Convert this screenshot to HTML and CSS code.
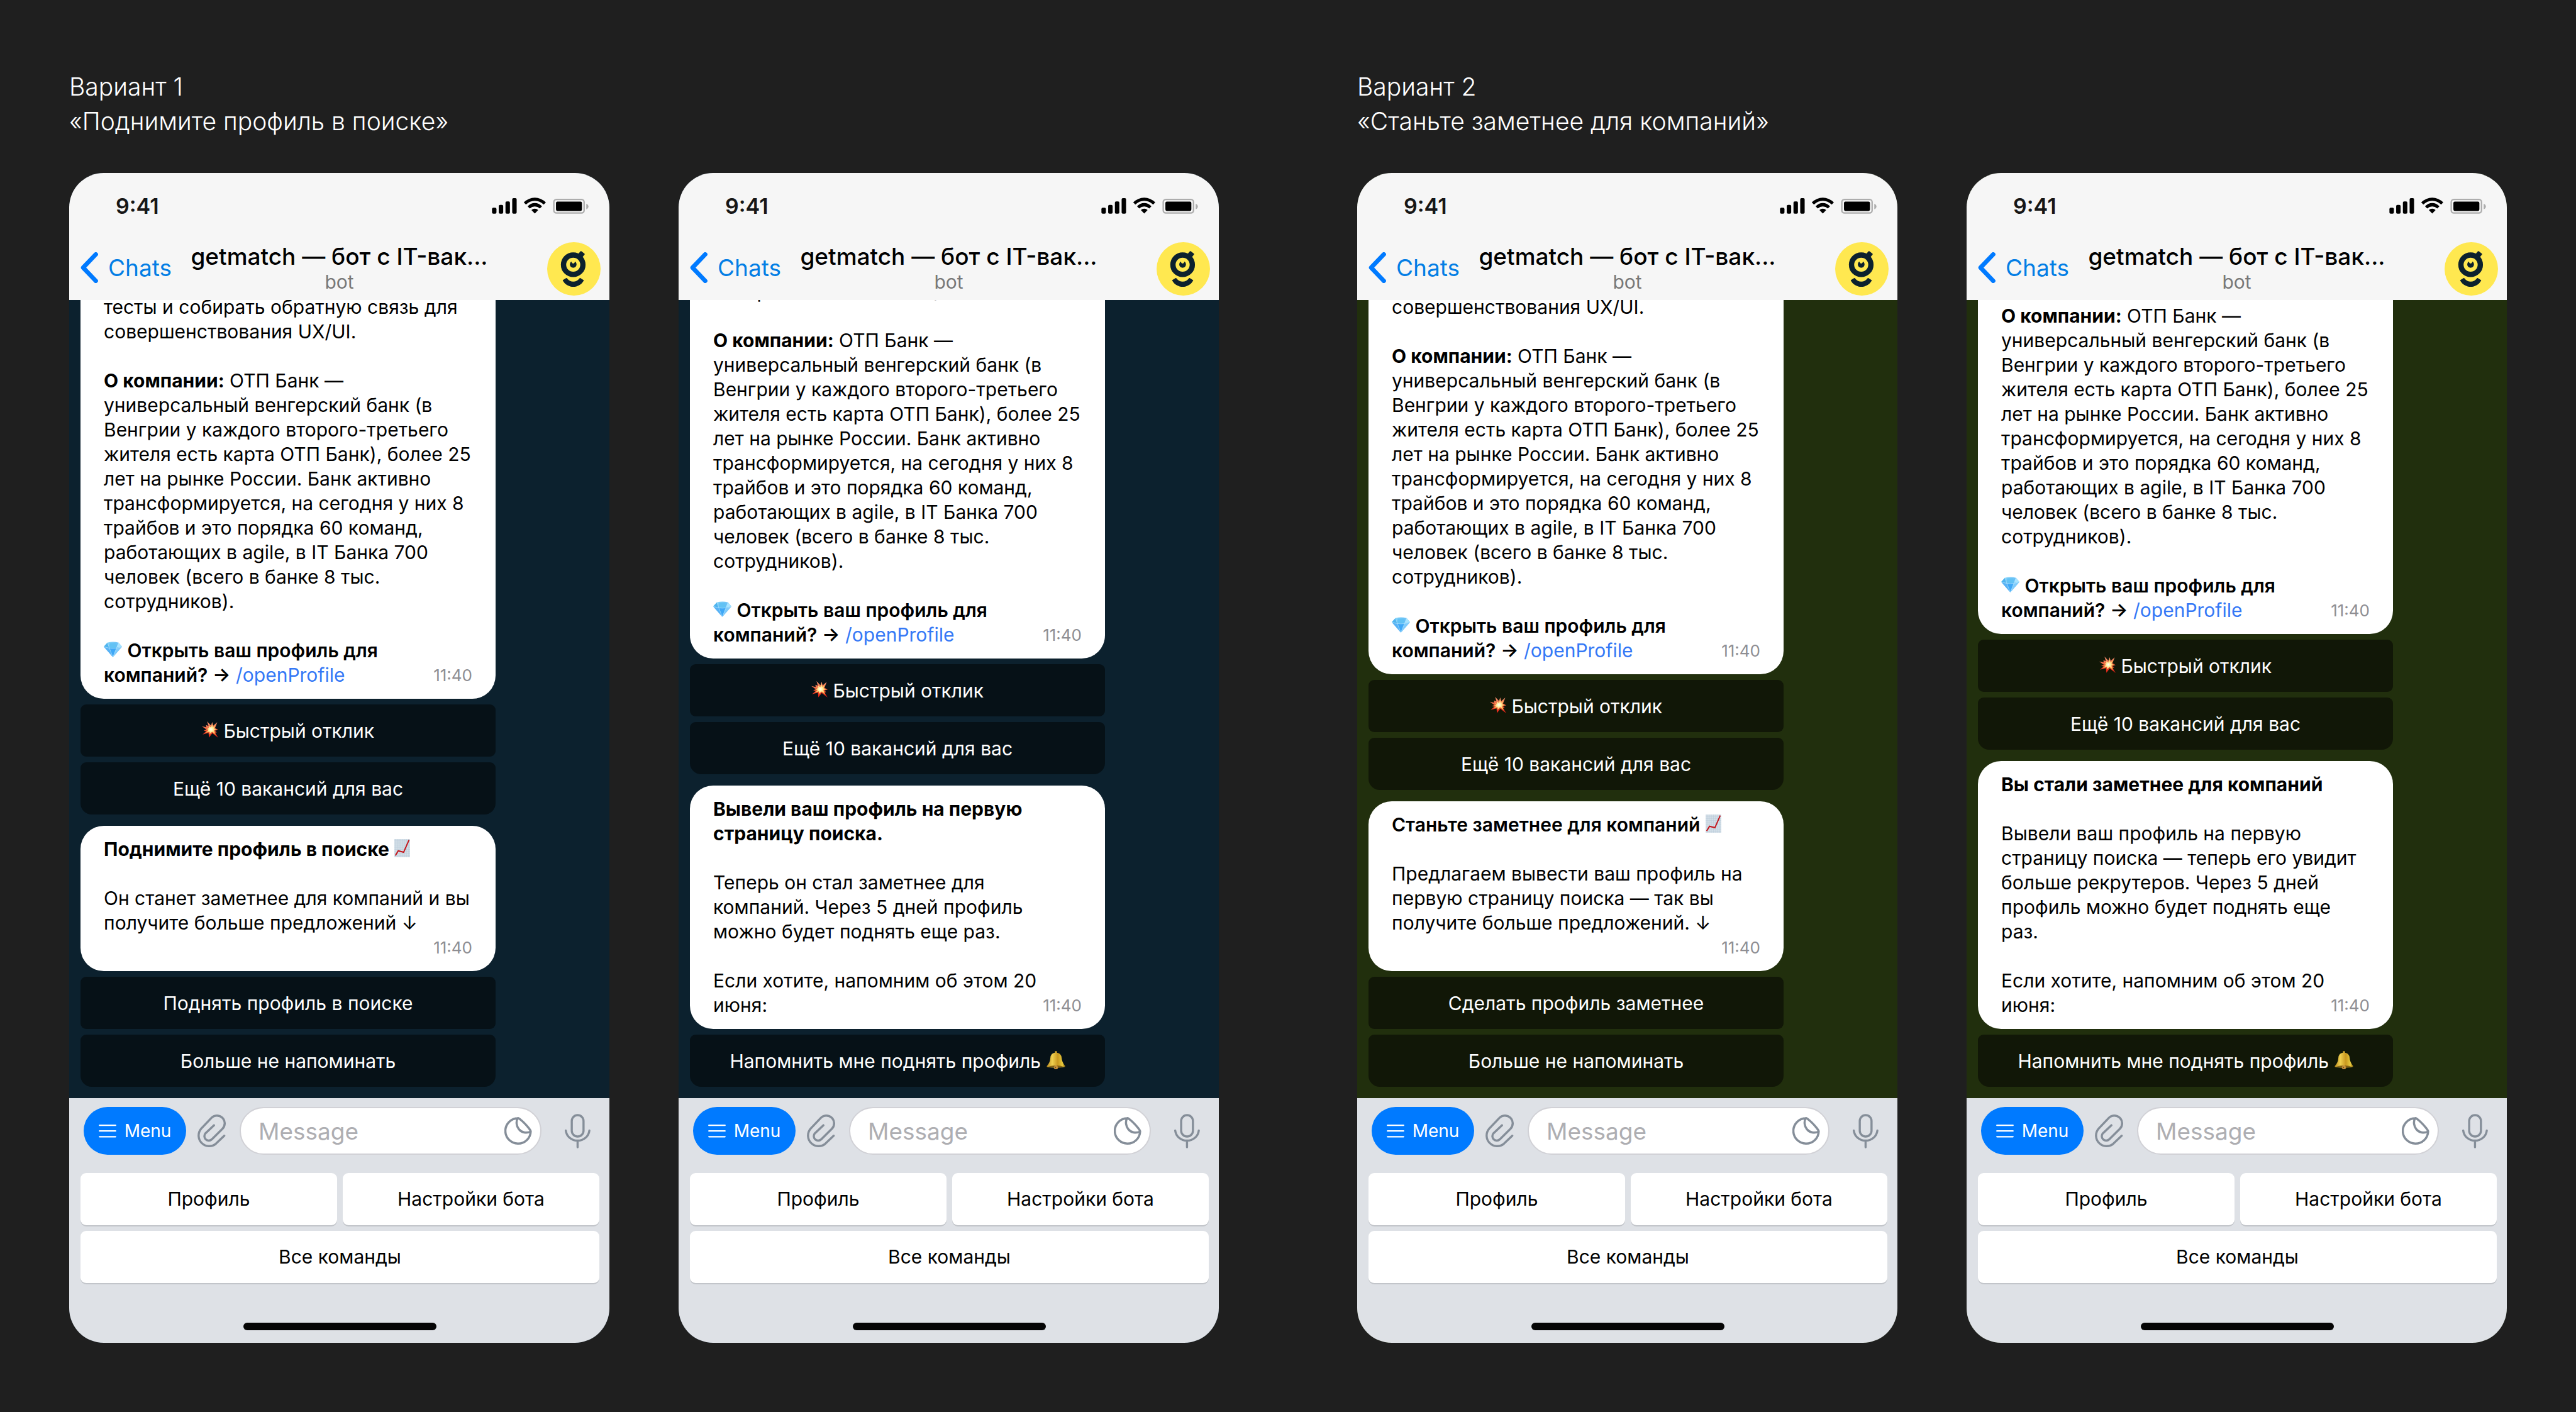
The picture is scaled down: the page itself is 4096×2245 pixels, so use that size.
FILE: index.html
```html
<!DOCTYPE html>
<html lang="ru">
<head>
<meta charset="utf-8">
<title>getmatch bot</title>
<link rel="stylesheet" href="styles.css">
</head>
<body>
<svg class="sprite" aria-hidden="true">
  <defs>
    <linearGradient id="gem-fill" x1="0" y1="0" x2="1" y2="1"><stop offset="0" stop-color="#8fdcfb"/><stop offset="1" stop-color="#3a9bf0"/></linearGradient>
    <linearGradient id="boom-fill" x1="0" y1="0" x2="0" y2="1"><stop offset="0" stop-color="#f79a78"/><stop offset=".5" stop-color="#f0603a"/><stop offset="1" stop-color="#e01810"/></linearGradient>
    <radialGradient id="boom-core"><stop offset="0" stop-color="#fff"/><stop offset=".35" stop-color="#fff3a8"/><stop offset="1" stop-color="#fbb040"/></radialGradient>
    <linearGradient id="bell-fill" x1="0" y1="0" x2="1" y2="0"><stop offset="0" stop-color="#b98a1c"/><stop offset=".3" stop-color="#f0d050"/><stop offset=".6" stop-color="#c9981f"/><stop offset=".85" stop-color="#e6c93c"/><stop offset="1" stop-color="#8f6a12"/></linearGradient>
  </defs>
  <symbol id="signal" viewBox="79 86 804 136">
    <rect x="80" y="171" width="37" height="50" rx="11"/><rect x="136" y="147" width="37" height="74" rx="11"/><rect x="192" y="119" width="37" height="102" rx="11"/><rect x="248" y="91" width="37" height="130" rx="11"/>
    <path d="M344 127 Q385 87 436 87 Q487 87 528 127 L510 145 Q478 113 436 113 Q394 113 362 145Z"/>
    <path d="M376 159 Q403 132 436 132 Q469 132 496 159 L478 177 Q459 160 436 160 Q413 160 394 177Z"/>
    <path d="M408 191 Q421 179 436 179 Q451 179 464 191 L436 219Z"/>
    <rect x="594" y="102" width="252" height="113" rx="22" fill="none" stroke="#adadad" stroke-width="12"/>
    <rect x="612" y="120" width="216" height="78" rx="12"/>
    <path d="M864 138 Q882 144 882 161 Q882 178 864 184Z" fill="#adadad"/>
  </symbol>
  <symbol id="logo" viewBox="540 456 444 444">
    <circle cx="762" cy="678" r="222" fill="#ffe850"/>
    <g fill="#0c212e">
      <circle cx="756.500" cy="643.500" r="80.500" fill="none" stroke="#0c212e" stroke-width="44"/>
      <path d="M799 553 L817 532 Q821 529 825 532 L850 551 Q854 555 851 559 L834 580Z"/>
      <path d="M740 618 C726 628 725 650 737 661 C748 671 765 671 776 661 C788 650 787 628 773 618 C770 616 769 632 756.500 633 C744 632 743 616 740 618Z"/>
      <path d="M671 771 L699 754 Q703 752 706 758 A64 64 0 0 0 808 758 Q811 752 815 754 L842 771 Q846 774 842 779 A99 99 0 0 1 672 779 Q668 774 671 771Z"/>
    </g>
  </symbol>
  <symbol id="back" viewBox="0 0 48 85"><path d="M42 6 L7 42.500 L42 79" fill="none" stroke="#007aff" stroke-width="12" stroke-linecap="round" stroke-linejoin="round"/></symbol>
  <symbol id="lines" viewBox="0 0 49 37"><path d="M2 2H47M2 18H47M2 34H47" fill="none" stroke="#fff" stroke-width="4" stroke-linecap="round"/></symbol>
  <symbol id="clip" viewBox="77 89 240 278"><path d="M305 266 L236 332 A88 88 0 0 1 112 208 L198 117 A64.500 64.500 0 0 1 290 208 L200 297 A36.500 36.500 0 0 1 148 246 L219 179" fill="none" stroke="#858e99" stroke-width="18" stroke-linecap="round"/></symbol>
  <symbol id="sticker" viewBox="60 107 229 229"><path d="M169 117 A105 105 0 1 0 278 226 Q277 218 262 199 Q222 149 183 121 Q175 115 169 117Z M169 119 C155 146 160 182 180 208 C202 236 243 244 278 228" fill="none" stroke="#858e99" stroke-width="18" stroke-linejoin="round"/></symbol>
  <symbol id="mic" viewBox="564 84 217 288"><g fill="none" stroke="#858e99" stroke-width="18" stroke-linecap="round"><rect x="623" y="93" width="99" height="180" rx="49"/><path d="M573 223 A99.500 94 0 0 0 771 223 M672 318 V363"/></g></symbol>
  <symbol id="gem" viewBox="0 0 150 128">
    <path d="M0 42 L30 8 Q75 -4 122 8 L150 42 L75 128Z" fill="url(#gem-fill)"/>
    <path d="M30 8 L45 48 L0 42Z" fill="#4fb4ee"/><path d="M50 12 H98 L106 50 Q75 58 45 48Z" fill="#62c2f4"/><path d="M122 8 L150 42 L106 50Z" fill="#a8e4ff"/><path d="M0 42 L45 50 L75 128Z" fill="#58b2f5"/><path d="M45 52 Q75 58 106 52 L75 128Z" fill="#3fa8f7"/><path d="M106 50 L150 42 L75 128Z" fill="#7fcbfb"/>
    <path d="M0 42 Q75 70 150 42 M30 8 L45 50 L75 128 L106 50 L122 8" fill="none" stroke="#bfeaff" stroke-width="3"/>
  </symbol>
  <symbol id="boom" viewBox="880 727 138 138">
    <path d="M880 768 L917 776 L915 757 L936 765 L924 727 L957 762 L967 732 L976 763 L1010 734 L991 783 L1018 798 L990 805 L1006 820 L992 822 L1018 865 L968 826 L940 864 L936 824 L886 837 L917 810 L896 804 L919 796Z" fill="url(#boom-fill)"/>
    <path d="M922 781 L940 784 L937 764 L956 777 L967 748 L974 776 L997 756 L983 786 L1003 798 L982 803 L997 840 L966 814 L946 836 L944 813 L910 824 L934 802 L912 799 L936 794Z" fill="url(#boom-core)"/>
  </symbol>
  <symbol id="chart" viewBox="0 0 44 51">
    <rect width="44" height="51" fill="#d3dfe8"/>
    <path d="M4 0V51M10 0V51M16 0V51M22 0V51M28 0V51M34 0V51M40 0V51M0 5H44M0 11H44M0 17H44M0 23H44M0 29H44M0 35H44M0 41H44M0 47H44" stroke="#b9cad8" stroke-width="1"/>
    <path d="M3 46 L11 33 L26 37 L41 3" fill="none" stroke="#c4161c" stroke-width="3.500"/>
  </symbol>
  <symbol id="bell" viewBox="426 47 156 153">
    <circle cx="504" cy="57" r="10" fill="#c9a02c"/>
    <circle cx="504" cy="182" r="19" fill="#b07f30"/>
    <path d="M504 60 Q548 62 552 106 Q553 138 581 172 Q584 180 570 183 Q504 191 436 183 Q424 180 428 173 Q456 142 457 106 Q460 62 504 60Z" fill="url(#bell-fill)"/>
    <path d="M440 176 Q504 164 568 176 Q504 190 440 176Z" fill="#7a5710"/>
    <circle cx="504" cy="183" r="15" fill="#c9923e"/><circle cx="500" cy="184" r="5" fill="#6e4a14"/>
  </symbol>
</svg>

<main class="board">
  <section class="variant">
    <h1 class="caption">Вариант 1<br>«Поднимите профиль в поиске»</h1>
    <div class="pair">

      <article class="phone">
        <header class="top">
          <div class="status"><span class="clock">9:41</span><svg class="signal"><use href="#signal"/></svg></div>
          <div class="nav">
            <a class="back" href="#"><svg class="back-icon"><use href="#back"/></svg>Chats</a>
            <div class="title"><h2 class="name">getmatch — бот с IT-вак...</h2><p class="kind">bot</p></div>
            <svg class="logo" role="img" aria-label="getmatch"><use href="#logo"/></svg>
          </div>
        </header>
        <div class="chat">
          <div class="bubble bubble-cut">тесты и собирать обратную связь для<br>совершенствования UX/UI.<br><br><strong>О компании:</strong> ОТП Банк —<br>универсальный венгерский банк (в<br>Венгрии у каждого второго-третьего<br>жителя есть карта ОТП Банк), более 25<br>лет на рынке России. Банк активно<br>трансформируется, на сегодня у них 8<br>трайбов и это порядка 60 команд,<br>работающих в agile, в IT Банка 700<br>человек (всего в банке 8 тыс.<br>сотрудников).<br><br><svg class="gem"><use href="#gem"/></svg> <b>Открыть ваш профиль для</b><br><time class="time">11:40</time><b>компаний? →</b> <a class="command" href="#">/openProfile</a></div>
          <div class="actions">
            <button class="action"><svg class="boom"><use href="#boom"/></svg> Быстрый отклик</button>
            <button class="action">Ещё 10 вакансий для вас</button>
          </div>
          <div class="bubble"><strong>Поднимите профиль в поиске</strong> <svg class="chart"><use href="#chart"/></svg><br><br>Он станет заметнее для компаний и вы<br>получите больше предложений ↓<br><time class="time">11:40</time><br></div>
          <div class="actions">
            <button class="action">Поднять профиль в поиске</button>
            <button class="action">Больше не напоминать</button>
          </div>
        </div>
        <footer class="panel">
          <div class="composer">
            <button class="menu"><svg class="lines"><use href="#lines"/></svg>Menu</button>
            <button class="icon" aria-label="Attach"><svg class="clip"><use href="#clip"/></svg></button>
            <div class="field"><input class="input" type="text" placeholder="Message" aria-label="Message"><button class="icon" aria-label="Stickers"><svg class="sticker"><use href="#sticker"/></svg></button></div>
            <button class="icon" aria-label="Voice"><svg class="mic"><use href="#mic"/></svg></button>
          </div>
          <div class="keys"><button class="key">Профиль</button><button class="key">Настройки бота</button><button class="key key-wide">Все команды</button></div>
          <div class="home"></div>
        </footer>
      </article>

      <article class="phone">
        <header class="top">
          <div class="status"><span class="clock">9:41</span><svg class="signal"><use href="#signal"/></svg></div>
          <div class="nav">
            <a class="back" href="#"><svg class="back-icon"><use href="#back"/></svg>Chats</a>
            <div class="title"><h2 class="name">getmatch — бот с IT-вак...</h2><p class="kind">bot</p></div>
            <svg class="logo" role="img" aria-label="getmatch"><use href="#logo"/></svg>
          </div>
        </header>
        <div class="chat">
          <div class="bubble bubble-cut">совершенствования UX/UI.<br><br><strong>О компании:</strong> ОТП Банк —<br>универсальный венгерский банк (в<br>Венгрии у каждого второго-третьего<br>жителя есть карта ОТП Банк), более 25<br>лет на рынке России. Банк активно<br>трансформируется, на сегодня у них 8<br>трайбов и это порядка 60 команд,<br>работающих в agile, в IT Банка 700<br>человек (всего в банке 8 тыс.<br>сотрудников).<br><br><svg class="gem"><use href="#gem"/></svg> <b>Открыть ваш профиль для</b><br><time class="time">11:40</time><b>компаний? →</b> <a class="command" href="#">/openProfile</a></div>
          <div class="actions">
            <button class="action"><svg class="boom"><use href="#boom"/></svg> Быстрый отклик</button>
            <button class="action">Ещё 10 вакансий для вас</button>
          </div>
          <div class="bubble"><strong>Вывели ваш профиль на первую<br>страницу поиска.</strong><br><br>Теперь он стал заметнее для<br>компаний. Через 5 дней профиль<br>можно будет поднять еще раз.<br><br>Если хотите, напомним об этом 20<br><time class="time">11:40</time>июня:</div>
          <div class="actions">
            <button class="action">Напомнить мне поднять профиль <svg class="bell"><use href="#bell"/></svg></button>
          </div>
        </div>
        <footer class="panel">
          <div class="composer">
            <button class="menu"><svg class="lines"><use href="#lines"/></svg>Menu</button>
            <button class="icon" aria-label="Attach"><svg class="clip"><use href="#clip"/></svg></button>
            <div class="field"><input class="input" type="text" placeholder="Message" aria-label="Message"><button class="icon" aria-label="Stickers"><svg class="sticker"><use href="#sticker"/></svg></button></div>
            <button class="icon" aria-label="Voice"><svg class="mic"><use href="#mic"/></svg></button>
          </div>
          <div class="keys"><button class="key">Профиль</button><button class="key">Настройки бота</button><button class="key key-wide">Все команды</button></div>
          <div class="home"></div>
        </footer>
      </article>
    </div>
  </section>

  <section class="variant variant-green">
    <h1 class="caption">Вариант 2<br>«Станьте заметнее для компаний»</h1>
    <div class="pair">

      <article class="phone">
        <header class="top">
          <div class="status"><span class="clock">9:41</span><svg class="signal"><use href="#signal"/></svg></div>
          <div class="nav">
            <a class="back" href="#"><svg class="back-icon"><use href="#back"/></svg>Chats</a>
            <div class="title"><h2 class="name">getmatch — бот с IT-вак...</h2><p class="kind">bot</p></div>
            <svg class="logo" role="img" aria-label="getmatch"><use href="#logo"/></svg>
          </div>
        </header>
        <div class="chat">
          <div class="bubble bubble-cut">совершенствования UX/UI.<br><br><strong>О компании:</strong> ОТП Банк —<br>универсальный венгерский банк (в<br>Венгрии у каждого второго-третьего<br>жителя есть карта ОТП Банк), более 25<br>лет на рынке России. Банк активно<br>трансформируется, на сегодня у них 8<br>трайбов и это порядка 60 команд,<br>работающих в agile, в IT Банка 700<br>человек (всего в банке 8 тыс.<br>сотрудников).<br><br><svg class="gem"><use href="#gem"/></svg> <b>Открыть ваш профиль для</b><br><time class="time">11:40</time><b>компаний? →</b> <a class="command" href="#">/openProfile</a></div>
          <div class="actions">
            <button class="action"><svg class="boom"><use href="#boom"/></svg> Быстрый отклик</button>
            <button class="action">Ещё 10 вакансий для вас</button>
          </div>
          <div class="bubble"><b>Станьте заметнее для компаний</b> <svg class="chart"><use href="#chart"/></svg><br><br>Предлагаем вывести ваш профиль на<br>первую страницу поиска — так вы<br>получите больше предложений. ↓<br><time class="time">11:40</time><br></div>
          <div class="actions">
            <button class="action">Сделать профиль заметнее</button>
            <button class="action">Больше не напоминать</button>
          </div>
        </div>
        <footer class="panel">
          <div class="composer">
            <button class="menu"><svg class="lines"><use href="#lines"/></svg>Menu</button>
            <button class="icon" aria-label="Attach"><svg class="clip"><use href="#clip"/></svg></button>
            <div class="field"><input class="input" type="text" placeholder="Message" aria-label="Message"><button class="icon" aria-label="Stickers"><svg class="sticker"><use href="#sticker"/></svg></button></div>
            <button class="icon" aria-label="Voice"><svg class="mic"><use href="#mic"/></svg></button>
          </div>
          <div class="keys"><button class="key">Профиль</button><button class="key">Настройки бота</button><button class="key key-wide">Все команды</button></div>
          <div class="home"></div>
        </footer>
      </article>

      <article class="phone">
        <header class="top">
          <div class="status"><span class="clock">9:41</span><svg class="signal"><use href="#signal"/></svg></div>
          <div class="nav">
            <a class="back" href="#"><svg class="back-icon"><use href="#back"/></svg>Chats</a>
            <div class="title"><h2 class="name">getmatch — бот с IT-вак...</h2><p class="kind">bot</p></div>
            <svg class="logo" role="img" aria-label="getmatch"><use href="#logo"/></svg>
          </div>
        </header>
        <div class="chat">
          <div class="bubble bubble-cut"><strong>О компании:</strong> ОТП Банк —<br>универсальный венгерский банк (в<br>Венгрии у каждого второго-третьего<br>жителя есть карта ОТП Банк), более 25<br>лет на рынке России. Банк активно<br>трансформируется, на сегодня у них 8<br>трайбов и это порядка 60 команд,<br>работающих в agile, в IT Банка 700<br>человек (всего в банке 8 тыс.<br>сотрудников).<br><br><svg class="gem"><use href="#gem"/></svg> <b>Открыть ваш профиль для</b><br><time class="time">11:40</time><b>компаний? →</b> <a class="command" href="#">/openProfile</a></div>
          <div class="actions">
            <button class="action"><svg class="boom"><use href="#boom"/></svg> Быстрый отклик</button>
            <button class="action">Ещё 10 вакансий для вас</button>
          </div>
          <div class="bubble"><strong>Вы стали заметнее для компаний</strong><br><br>Вывели ваш профиль на первую<br>страницу поиска — теперь его увидит<br>больше рекрутеров. Через 5 дней<br>профиль можно будет поднять еще<br>раз.<br><br>Если хотите, напомним об этом 20<br><time class="time">11:40</time>июня:</div>
          <div class="actions">
            <button class="action">Напомнить мне поднять профиль <svg class="bell"><use href="#bell"/></svg></button>
          </div>
        </div>
        <footer class="panel">
          <div class="composer">
            <button class="menu"><svg class="lines"><use href="#lines"/></svg>Menu</button>
            <button class="icon" aria-label="Attach"><svg class="clip"><use href="#clip"/></svg></button>
            <div class="field"><input class="input" type="text" placeholder="Message" aria-label="Message"><button class="icon" aria-label="Stickers"><svg class="sticker"><use href="#sticker"/></svg></button></div>
            <button class="icon" aria-label="Voice"><svg class="mic"><use href="#mic"/></svg></button>
          </div>
          <div class="keys"><button class="key">Профиль</button><button class="key">Настройки бота</button><button class="key key-wide">Все команды</button></div>
          <div class="home"></div>
        </footer>
      </article>
    </div>
  </section>
</main>
</body>
</html>
```
FILE: styles.css
```css
* { box-sizing: border-box; }

body {
  margin: 0;
  background: #1f1f1f;
  color: #000;
  font-family: Inter, "Liberation Sans", sans-serif;
  font-size: 30px;
  line-height: 39px;
}

button, input { font: inherit; border: 0; margin: 0; padding: 0; }
h1, h2, p { margin: 0; font-weight: 400; }
a { text-decoration: none; }
b { font-weight: 600; }
strong { font-weight: 700; }
svg { flex: none; }
.sprite { position: absolute; width: 0; height: 0; }

.board { display: flex; gap: 220px; height: 100vh; padding: 110px; }
.variant { flex: 1; display: flex; flex-direction: column; gap: 55px; min-width: 0; --wall: #0c212e; --key: #061117; }
.variant-green { --wall: #212f0d; --key: #111707; }
.caption { color: #fff; font-size: 39px; font-weight: 300; line-height: 55px; }
.pair { flex: 1; display: flex; gap: 110px; min-height: 0; }

.phone { flex: 1; display: flex; flex-direction: column; min-width: 0; overflow: hidden; border-radius: 55px; background: var(--wall); }

.top { flex: none; background: #f6f6f6; }
.status { display: flex; justify-content: space-between; align-items: center; height: 104px; padding: 0 33px 0 74px; }
.clock { font-size: 34px; font-weight: 600; color: #161616; }
.signal { width: 154px; height: 26px; }
.nav { display: grid; grid-template-columns: 1fr auto 1fr; height: 98px; padding: 0 14px; }
.back { display: flex; align-items: center; gap: 16px; height: 92px; padding-left: 4px; color: #037ee5; font-size: 37px; }
.back-icon { width: 28px; height: 49px; }
.title { display: flex; flex-direction: column; padding-top: 6px; text-align: center; }
.name { font-size: 37px; line-height: 46px; font-weight: 500; white-space: nowrap; }
.kind { color: #787878; line-height: 34px; }
.logo { justify-self: end; width: 85px; height: 85px; margin-top: 6px; }

.chat { flex: 1; display: flex; flex-direction: column; justify-content: flex-end; gap: 9px; min-height: 0; padding: 0 181px 18px 18px; overflow: hidden; }
.bubble { flex: none; padding: 18px 37px; border-radius: 37px; background: #fff; white-space: nowrap; }
.bubble-cut { padding-top: 60px; border-radius: 0 0 37px 37px; }
.bubble:not(.bubble-cut) { margin-top: 9px; }
.time { float: right; color: #8e8e93; font-size: 26px; }
.command { color: #3478f6; }
.actions { display: flex; flex-direction: column; gap: 9px; }
.action { height: 83px; padding-top: 2px; border-radius: 9px; background: var(--key); color: #fff; white-space: nowrap; }
.action:last-child { border-radius: 9px 9px 18px 18px; }
.gem { width: 29px; height: 25px; }
.boom { width: 26px; height: 26px; }
.chart { width: 25px; height: 29px; vertical-align: -2px; }
.bell { width: 30px; height: 29px; vertical-align: -2px; }

.panel { flex: none; background: #dee1e6; padding: 14px 16px 20px 18px; }
.composer { display: flex; align-items: center; padding: 0 14px 0 5px; }
.menu { display: flex; align-items: center; justify-content: center; gap: 13px; width: 163px; height: 76px; margin-right: 17px; border-radius: 38px; background: #007aff; color: #fff; font-size: 28px; }
.lines { width: 28px; height: 21px; }
.icon { display: flex; background: none; }
.clip { width: 46px; height: 53px; }
.field { flex: 1; display: flex; align-items: center; min-width: 0; height: 76px; margin: 0 37px 0 22px; padding: 0 13px 0 28px; border: 2px solid #d1d1d6; border-radius: 38px; background: #fff; }
.input { flex: 1; min-width: 0; height: 60px; background: none; font-size: 37px; outline: none; }
.input::placeholder { color: #aeaeb2; opacity: 1; }
.sticker { width: 44px; height: 44px; }
.mic { width: 41px; height: 55px; }
.keys { display: grid; grid-template-columns: 1fr 1fr; gap: 9px; margin-top: 29px; }
.key { height: 83px; border-radius: 9px; background: #fff; box-shadow: 0 2px 0 #c2c5ca; color: #000; }
.key-wide { grid-column: 1 / -1; }
.home { width: 307px; height: 12px; margin: 63px auto 0; border-radius: 6px; background: #050505; }
```
